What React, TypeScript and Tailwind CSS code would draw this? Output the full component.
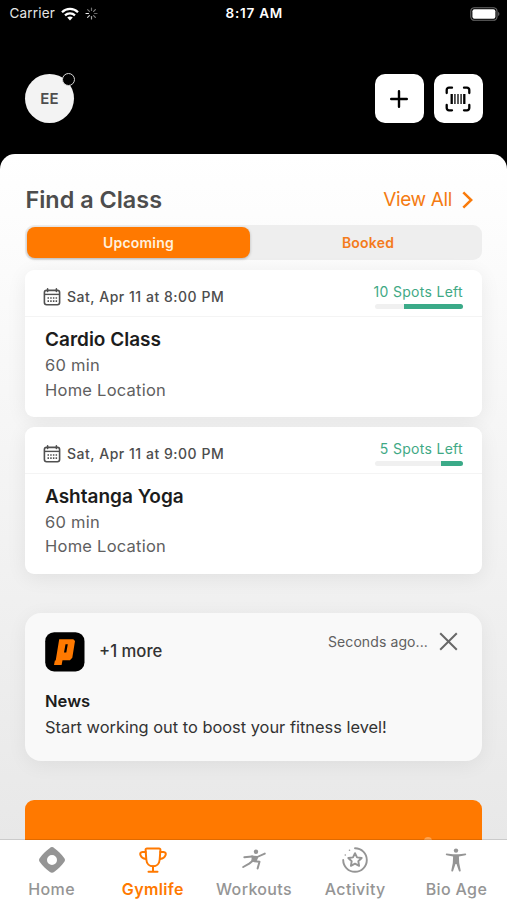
import type { ReactNode } from 'react';

interface GymClass {
  date: string;
  name: string;
  duration: string;
  location: string;
  spots: number;
  /** Share of the bar that is filled, in percent. */
  fill: number;
}

const CLASSES: GymClass[] = [
  { date: 'Sat, Apr 11 at 8:00 PM', name: 'Cardio Class', duration: '60 min', location: 'Home Location', spots: 10, fill: 67 },
  { date: 'Sat, Apr 11 at 9:00 PM', name: 'Ashtanga Yoga', duration: '60 min', location: 'Home Location', spots: 5, fill: 25 },
];

function WifiIcon() {
  return (
    <svg width="18" height="14" viewBox="0 0 18 14" fill="none" stroke="white" strokeWidth="2.2">
      <path d="M1 5.2C5.4 .7 12.6 .7 17 5.2" />
      <path d="M4 8.4c2.8-2.8 7.2-2.8 10 0" />
      <path d="M9 13.4 6.2 10.5c1.6-1.5 4-1.5 5.6 0Z" fill="white" stroke="none" />
    </svg>
  );
}

function SpinnerIcon() {
  return (
    <svg width="13" height="13" viewBox="0 0 13 13" stroke="white" strokeWidth="1.2" strokeLinecap="round">
      <path d="M6.5 1v2.5" opacity=".45" />
      <path d="m10.4 2.6-1.8 1.8" opacity=".5" />
      <path d="M12 6.5H9.5" opacity=".4" />
      <path d="m10.4 10.4-1.8-1.8" opacity=".5" />
      <path d="M6.5 12V9.5" opacity=".65" />
      <path d="m2.6 10.4 1.8-1.8" opacity=".8" />
      <path d="M1 6.5h2.5" opacity=".95" />
      <path d="m2.6 2.6 1.8 1.8" opacity=".45" />
    </svg>
  );
}

function BatteryIcon() {
  return (
    <svg width="30" height="14" viewBox="0 0 30 14">
      <rect x=".8" y=".7" width="26.2" height="12.6" rx="3.6" fill="none" stroke="#6b6b6b" strokeWidth="1.1" />
      <rect x="2.4" y="2.3" width="23" height="9.4" rx="2" fill="white" />
      <path d="M28.2 4.7c1.6.7 1.6 3.7 0 4.4Z" fill="#6b6b6b" />
    </svg>
  );
}

function BarcodeIcon() {
  return (
    <svg width="26" height="26" viewBox="0 0 26 26" fill="none" stroke="black" strokeWidth="2.3" strokeLinecap="round">
      <path d="M1.7 7V4a2.3 2.3 0 0 1 2.3-2.3h3M19 1.7h3A2.3 2.3 0 0 1 24.3 4v3M24.3 19v3a2.3 2.3 0 0 1-2.3 2.3h-3M7 24.3H4A2.3 2.3 0 0 1 1.7 22v-3" />
      <path d="M6.7 8v10M19.3 8v10" strokeWidth="2.3" strokeLinecap="butt" />
      <path d="M9.9 8v10M13 8v10M16.1 8v10" stroke="#333" strokeWidth="1.6" strokeLinecap="butt" />
    </svg>
  );
}

function CalendarIcon() {
  return (
    <svg width="18" height="18" viewBox="0 0 18 18" fill="none" stroke="#505050" strokeWidth="1.6">
      <rect x="1.4" y="2.4" width="15.2" height="14.3" rx="2.2" />
      <path d="M1.4 6.4h15.2" strokeWidth="1.4" />
      <path d="M4.6 .9v2.5M13.4 .9v2.5" strokeLinecap="round" />
      <path d="M4.5 10h9.6M4.5 13.1h9.6" strokeDasharray="1.5 1.2" />
    </svg>
  );
}

function LogoMark() {
  return (
    <svg width="40" height="40" viewBox="0 0 40 40">
      <rect x=".2" y=".2" width="39.3" height="39.3" rx="9" fill="black" />
      <path
        fill="#ff7900"
        fillRule="evenodd"
        d="M14.2 7.2H28.3L30 9 27.3 25.7 24.9 28.2H17.5L16.6 33H9L9.9 28.5H10.7ZM20.5 12.3 19 20.5H21.3L22.8 12.3Z"
      />
    </svg>
  );
}

function HomeIcon() {
  return (
    <svg width="26" height="26" viewBox="0 0 26 26" fill="#959595">
      <path
        fillRule="evenodd"
        d="M10.6 1.2a3.5 3.5 0 0 1 4.8 0c3.3 2.3 7.1 6 9.4 9.3a3.5 3.5 0 0 1 0 4.9c-2.3 3.3-6.1 7-9.4 9.3a3.5 3.5 0 0 1-4.8 0c-3.3-2.3-7.1-6-9.4-9.3a3.5 3.5 0 0 1 0-4.9c2.3-3.3 6.1-7 9.4-9.3ZM13 8a5 5 0 1 0 0 10 5 5 0 0 0 0-10Z"
      />
    </svg>
  );
}

function TrophyIcon() {
  return (
    <svg width="28" height="26" viewBox="0 0 28 26" fill="none" stroke="#ff7900" strokeWidth="2" strokeLinecap="round" strokeLinejoin="round">
      <path d="M8 1.5h12c1 0 1.5.5 1.4 1.5l-.7 9.5c-.3 4.4-3.3 6.8-6.7 6.8s-6.4-2.400-6.700-6.800L6.600 3c-.1-1 .4-1.500 1.400-1.500Z" />
      <path d="M6.700 5H3.500C1.300 5 .9 6.500 1.500 8.300c.8 2.300 2.700 3.500 5.300 3.800M21.300 5h3.200c2.200 0 2.600 1.500 2 3.300-.8 2.300-2.700 3.500-5.300 3.800M14 19.300v5.200M9.500 24.700h9" />
    </svg>
  );
}

function RunnerIcon() {
  return (
    <svg width="26" height="26" viewBox="0 0 26 26" fill="none" stroke="#959595" strokeLinecap="round" strokeLinejoin="round">
      <circle cx="15" cy="4.800" r="2.200" fill="#959595" stroke="none" />
      <path d="M3.300 10.200 11 9.500" strokeWidth="1.900" />
      <path d="m11 9.500 5.200.5 7.600-3.400" strokeWidth="1.900" />
      <path d="M11.500 9.500 16.500 10.500 14.800 14.300 11 14Z" fill="#959595" strokeWidth="1.400" />
      <path d="m11.800 13.800-3.600 2.800L2.200 20" strokeWidth="2" />
      <path d="m13.500 14.300 5 .5-1.900 6.700" strokeWidth="2" />
    </svg>
  );
}

function ActivityIcon() {
  return (
    <svg width="26" height="26" viewBox="0 0 26 26" fill="none" stroke="#959595" strokeWidth="1.900" strokeLinecap="round" strokeLinejoin="round">
      <path d="M13 1.200A11.800 11.800 0 1 1 1.200 13" />
      <path d="m13 6.200 2 4.200 4.700.6-3.400 3.200.8 4.600-4.100-2.200-4.100 2.200.8-4.600L6.300 11l4.700-.6Z" />
      <circle cx="3.300" cy="8" r=".8" fill="#959595" stroke="none" />
      <circle cx="7.500" cy="3.300" r=".8" fill="#959595" stroke="none" />
    </svg>
  );
}

function BodyIcon() {
  return (
    <svg width="22" height="26" viewBox="0 0 22 26" fill="#959595">
      <circle cx="11" cy="3.600" r="2.200" />
      <path d="M1.600 6.600 8 7.300h6l6.400-.7c1 0 1.100 1.500.1 1.700L13.900 9.500l.3 6.500 1.500 7.500c.1 1.200-1.400 1.500-1.800.4L11.500 17h-1l-2.400 6.900c-.4 1.100-1.900.8-1.800-.4L7.800 16l.3-6.500-6.600-1.200c-1-.2-.9-1.700.1-1.700Z" />
    </svg>
  );
}

function ClassCard({ item }: { item: GymClass }) {
  return (
    <article className="h-[147px] rounded-[9px] bg-white shadow-[0_4px_20px_rgba(0,0,0,0.07)]">
      <header className="flex h-[47px] items-start justify-between border-b border-[#f4f4f4] pl-[18px] pr-[19px]">
        <div className="flex items-center gap-[6px] pt-[17px]">
          <CalendarIcon />
          <span className="text-[14px] leading-5 font-medium tracking-[0.52px] text-[#4d4d4d]">{item.date}</span>
        </div>
        <div className="flex flex-col items-end pt-3">
          <span className="text-[14px] leading-5 tracking-[0.3px] text-[#3fa985]">{item.spots} Spots Left</span>
          <div className="mt-[2px] flex h-[5px] w-[88px] justify-end rounded-full bg-[#f0f0f0]">
            <div className="h-full rounded-r-full bg-[#3baa88]" style={{ width: `${item.fill}%` }} />
          </div>
        </div>
      </header>
      <div className="px-5 pt-[9px]">
        <h2 className="text-[19px] leading-[27px] font-semibold text-[#1c1c1c]">{item.name}</h2>
        <p className="text-[16.5px] leading-[24.5px] tracking-[0.24px] text-[#606060]">{item.duration}</p>
        <p className="text-[16.5px] leading-[24.5px] tracking-[0.24px] text-[#606060]">{item.location}</p>
      </div>
    </article>
  );
}

function Tab({ icon, label, active = false }: { icon: ReactNode; label: string; active?: boolean }) {
  return (
    <button className={`flex flex-1 flex-col items-center pt-[7px] ${active ? 'font-semibold text-[#ff7900]' : 'font-medium text-[#959595]'}`}>
      {icon}
      <span className="mt-[5px] text-[16px] leading-[22px] tracking-[0.35px] whitespace-nowrap">{label}</span>
    </button>
  );
}

export default function App() {
  return (
    <div className="flex h-[900px] w-[507px] flex-col overflow-hidden bg-black font-['Inter',sans-serif]">
      <div className="grid h-[27px] shrink-0 grid-cols-3 items-center pl-[9.5px] pr-[7px] text-[13.5px] text-white">
        <div className="flex items-center gap-[6px]">
          <span className="tracking-[0.2px] text-[#e5e5e5]">Carrier</span>
          <WifiIcon />
          <SpinnerIcon />
        </div>
        <span className="pr-px text-center font-semibold tracking-[0.75px]">8:17 AM</span>
        <span className="flex justify-end">
          <BatteryIcon />
        </span>
      </div>

      <div className="flex h-[126.5px] shrink-0 items-start justify-between px-[25px] pt-[47px]">
        <div className="relative grid size-[49px] place-items-center rounded-full bg-[#f3f3f3] pt-px text-[15px] font-semibold tracking-[0.1px] text-[#4d4d4d]">
          EE
          <span className="absolute -top-px -right-px size-[13px] rounded-full border border-[#d5d5d5] bg-black" />
        </div>
        <div className="-mr-[0.5px] flex gap-[10px]">
          <button aria-label="Add" className="grid size-[49px] place-items-center rounded-[10px] bg-white">
            <svg width="18" height="18" viewBox="0 0 18 18" stroke="black" strokeWidth="2.4" strokeLinecap="round">
              <path d="M9 1.2v15.6M1.2 9h15.6" />
            </svg>
          </button>
          <button aria-label="Scan" className="grid size-[49px] place-items-center rounded-[10px] bg-white">
            <BarcodeIcon />
          </button>
        </div>
      </div>

      <main className="flex min-h-0 flex-1 flex-col overflow-hidden rounded-t-[15px] bg-linear-to-b from-white to-[#e8e8e8] px-[25px]">
        <div className="flex h-[71.5px] shrink-0 items-start justify-between pt-[31.5px] pr-[9px] pl-[0.5px]">
          <h1 className="text-[23.4px] leading-[30px] font-semibold text-[#4d4d4d]">Find a Class</h1>
          <a className="flex items-center gap-[10px] text-[19px] leading-[30px] tracking-[-0.35px] text-[#f47b12]">
            View All
            <svg width="11" height="18" viewBox="0 0 11 18" fill="none" stroke="#f97b0c" strokeWidth="2.5">
              <path d="m1.3 1.3 7.9 7.7-7.9 7.7" />
            </svg>
          </a>
        </div>

        <div className="flex h-[35px] shrink-0 rounded-[9px] bg-[#eeeeee] p-[2px] text-[14px] font-semibold tracking-[0.2px]">
          <button className="w-[223px] rounded-[8px] bg-[#ff7900] text-[#fff0dc] shadow-[0_1px_3px_rgba(0,0,0,0.25)]">Upcoming</button>
          <button className="flex-1 pl-[6px] text-[#f47b1c]">Booked</button>
        </div>

        <div className="mt-[10px] flex shrink-0 flex-col gap-[9.5px]">
          {CLASSES.map((item) => (
            <ClassCard key={item.name} item={item} />
          ))}
        </div>

        <article className="mt-[39.5px] h-[147.5px] shrink-0 rounded-[16px] bg-[#f9f9f9] px-5 pt-[19px] shadow-[0_4px_20px_rgba(0,0,0,0.06)]">
          <div className="flex h-10 items-center">
            <LogoMark />
            <span className="ml-[14px] text-[16.7px] font-medium text-[#333]">+1 more</span>
            <span className="mb-[22px] ml-auto text-[14px] tracking-[0.1px] text-[#606060]">Seconds ago...</span>
            <svg className="mr-[4px] mb-[22px] ml-[11px]" width="19" height="19" viewBox="0 0 19 19" stroke="#686868" strokeWidth="2">
              <path d="m1.2 1.2 16.600 16.600M17.800 1.200 1.200 17.800" />
            </svg>
          </div>
          <h2 className="mt-[16px] text-[16.6px] leading-[26px] font-semibold text-[#1c1c1c]">News</h2>
          <p className="text-[16.4px] leading-[27px] text-[#333]">Start working out to boost your fitness level!</p>
        </article>

        <div className="mt-[39.5px] flex min-h-0 flex-1 items-end justify-end overflow-hidden rounded-t-[9px] bg-[#ff7900]">
          <span className="mr-[50px] -mb-[5px] size-2 rounded-full bg-[#ffa34e]" />
        </div>
      </main>

      <nav className="flex h-[60px] shrink-0 bg-white pl-px shadow-[0_-1px_0_rgba(0,0,0,0.12)]">
        <Tab icon={<HomeIcon />} label="Home" />
        <Tab icon={<TrophyIcon />} label="Gymlife" active />
        <Tab icon={<RunnerIcon />} label="Workouts" />
        <Tab icon={<ActivityIcon />} label="Activity" />
        <Tab icon={<BodyIcon />} label="Bio Age" />
      </nav>
    </div>
  );
}
